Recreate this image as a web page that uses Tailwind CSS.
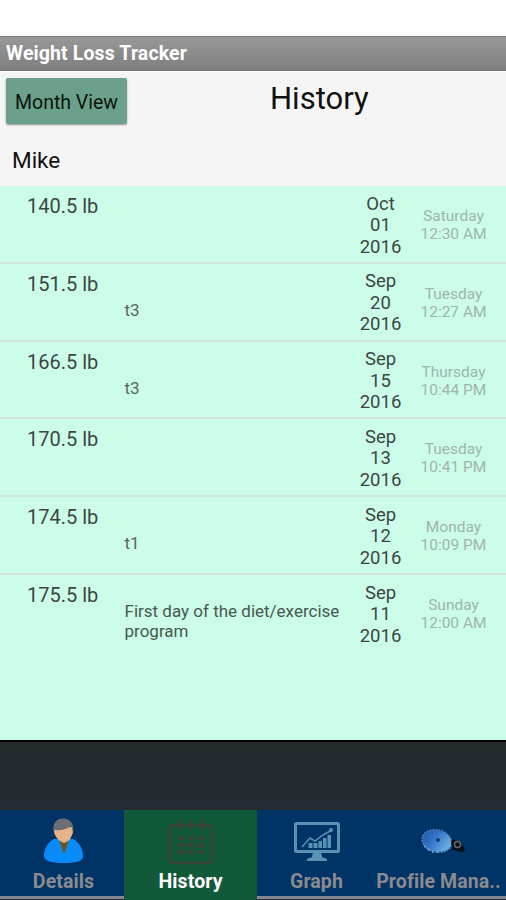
<!DOCTYPE html>
<html lang="en">
<head>
<meta charset="utf-8">
<title>Weight Loss Tracker</title>
<script src="https://cdn.jsdelivr.net/npm/@tailwindcss/browser@4"></script>
</head>
<body class="bg-white">
<div class="flex h-[900px] w-[506px] flex-col overflow-hidden pt-9 font-[Roboto,sans-serif]">
  <header class="flex h-[35px] shrink-0 items-center border-t border-b border-t-[#7c7c7c] border-b-[#757575] bg-linear-to-b from-[#989898] to-[#7f7f7f] pl-1.5">
    <h1 class="text-[19.5px] leading-none font-bold tracking-[0.12px] whitespace-nowrap text-white">Weight Loss Tracker</h1>
  </header>
  <section class="flex h-[115px] shrink-0 flex-col border-t border-white bg-[#f5f5f5] text-[#111]">
    <div class="flex pt-[6px] pl-1.5">
      <button class="h-[46px] w-[121px] rounded-[2px] bg-[#6ba18b] pt-[3px] text-[19.5px] leading-none whitespace-nowrap text-[#0b120f] shadow-[0_1px_2px_rgba(0,0,0,0.4)]">Month View</button>
      <h2 class="ml-[143px] pt-[3px] text-[31px] leading-[36px]">History</h2>
    </div>
    <p class="mt-[23px] pl-3 text-[22.5px] leading-[26px]">Mike</p>
  </section>
  <main class="h-[554px] shrink-0 bg-[#ccfde9] text-[#3c4643]">
    <div class="flex h-[77.8px] border-b-2 border-[#d3e5dc]">
      <div class="w-[124.5px] pt-2 pl-[27px] text-[20px] leading-6">140.5 lb</div>
      <div class="w-[225.5px]"></div>
      <div class="w-[61px] pt-[7.5px] text-center text-[18.5px] leading-[21.5px]">Oct<br>01<br>2016</div>
      <div class="w-[85px] pt-[21px] text-center text-[15.5px] leading-[18px] text-[#a0b5ac]">Saturday<br>12:30 AM</div>
    </div>
    <div class="flex h-[77.8px] border-b-2 border-[#d3e5dc]">
      <div class="w-[124.5px] pt-2 pl-[27px] text-[20px] leading-6">151.5 lb</div>
      <div class="w-[225.5px] pt-[37px] text-[17px] leading-[19.6px] text-[#566760]">t3</div>
      <div class="w-[61px] pt-[7.5px] text-center text-[18.5px] leading-[21.5px]">Sep<br>20<br>2016</div>
      <div class="w-[85px] pt-[21px] text-center text-[15.5px] leading-[18px] text-[#a0b5ac]">Tuesday<br>12:27 AM</div>
    </div>
    <div class="flex h-[77.8px] border-b-2 border-[#d3e5dc]">
      <div class="w-[124.5px] pt-2 pl-[27px] text-[20px] leading-6">166.5 lb</div>
      <div class="w-[225.5px] pt-[37px] text-[17px] leading-[19.6px] text-[#566760]">t3</div>
      <div class="w-[61px] pt-[7.5px] text-center text-[18.5px] leading-[21.5px]">Sep<br>15<br>2016</div>
      <div class="w-[85px] pt-[21px] text-center text-[15.5px] leading-[18px] text-[#a0b5ac]">Thursday<br>10:44 PM</div>
    </div>
    <div class="flex h-[77.8px] border-b-2 border-[#d3e5dc]">
      <div class="w-[124.5px] pt-2 pl-[27px] text-[20px] leading-6">170.5 lb</div>
      <div class="w-[225.5px]"></div>
      <div class="w-[61px] pt-[7.5px] text-center text-[18.5px] leading-[21.5px]">Sep<br>13<br>2016</div>
      <div class="w-[85px] pt-[21px] text-center text-[15.5px] leading-[18px] text-[#a0b5ac]">Tuesday<br>10:41 PM</div>
    </div>
    <div class="flex h-[77.8px] border-b-2 border-[#d3e5dc]">
      <div class="w-[124.5px] pt-2 pl-[27px] text-[20px] leading-6">174.5 lb</div>
      <div class="w-[225.5px] pt-[37px] text-[17px] leading-[19.6px] text-[#566760]">t1</div>
      <div class="w-[61px] pt-[7.5px] text-center text-[18.5px] leading-[21.5px]">Sep<br>12<br>2016</div>
      <div class="w-[85px] pt-[21px] text-center text-[15.5px] leading-[18px] text-[#a0b5ac]">Monday<br>10:09 PM</div>
    </div>
    <div class="flex h-[77.8px]">
      <div class="w-[124.5px] pt-2 pl-[27px] text-[20px] leading-6">175.5 lb</div>
      <div class="w-[225.5px] pt-[27px] text-[17px] leading-[19.6px] text-[#465850]">First day of the diet/exercise<br>program</div>
      <div class="w-[61px] pt-[8px] text-center text-[18.5px] leading-[21.5px]">Sep<br>11<br>2016</div>
      <div class="w-[85px] pt-[21px] text-center text-[15.5px] leading-[18px] text-[#a0b5ac]">Sunday<br>12:00 AM</div>
    </div>
  </main>
  <div class="h-[70px] shrink-0 border-t-2 border-black bg-linear-to-b from-[#222a2c] to-[#262a33]"></div>
  <nav class="flex h-[90px] shrink-0 bg-[#222a33] text-[19.5px] leading-[22px] font-bold tracking-[0.1px] text-[#8b8b8f]">
    <div class="flex h-[89px] w-[124px] flex-col items-center border-b-3 border-[#85868f] bg-[#003466] pt-2 pl-[3px]">
      <svg class="h-[46px] w-[42px] shrink-0" viewBox="0 0 42 46">
        <path d="M11 21C5 24 1 31 1 38q0 7 20 7t19-7c0-7-4-14-10-17z" fill="#078cfa"/>
        <path d="M16 22h10l-5 14z" fill="#76501f"/>
        <path d="M12 9h17l1 5q-2 7-5 9l-4 2-4-2q-5-4-6-9z" fill="#e7b38b"/>
        <path d="M10.500 14Q9 1 20 .5 31 1 30.500 14L28 8q-6 5-17 4z" fill="#6b6f71"/>
      </svg>
      <span class="mt-[7px]">Details</span>
    </div>
    <div class="flex h-[90px] w-[133px] flex-col items-center bg-[#12593a] pt-[10px] text-white">
      <svg class="h-[45px] w-[46px] shrink-0" viewBox="0 0 46 45" fill="none" stroke="#3b423c" stroke-width="2.4">
        <path d="M8 5H5.500q-4 0-4 4v30q0 4 4 4h35q4 0 4-4V9q0-4-4-4H8"/>
        <path d="M12 0v10M23 0v10M34.500 0v10" stroke-width="2.800"/>
        <path d="M10.500 18h5.500m4.200 0h5.500m4.200 0h5.500M10.500 25h5.500m4.200 0h5.500m4.200 0h5.500M10.500 32h5.500m4.200 0h5.500m4.200 0h5.500" stroke-width="4.600"/>
      </svg>
      <span class="mt-[6px]">History</span>
    </div>
    <div class="flex h-[89px] w-[119px] flex-col items-center border-b-3 border-[#85868f] bg-[#003466] pt-3">
      <svg class="h-[40px] w-[46px] shrink-0" viewBox="0 0 46 40">
        <rect x="1.500" y="1.500" width="43" height="28" rx="1" fill="none" stroke="#5793b2" stroke-width="3"/>
        <path d="M19 30h8l1 5 5 2v2H13v-2l5-2z" fill="#5793b2"/>
        <path d="M14.500 21h4v5h-4zM19.500 21h4v5h-4zM24.500 19h3.500v7h-3.500zM29 16h3.500v10H29zM33.500 13h3.500v13h-3.500z" fill="#5793b2"/>
        <path d="M8 25l8-9 5 3 8-6 9-5" fill="none" stroke="#5793b2" stroke-width="1.500"/>
        <circle cx="37" cy="8" r="2" fill="#5793b2"/>
      </svg>
      <span class="mt-[9px]">Graph</span>
    </div>
    <div class="flex h-[89px] w-[130px] flex-col items-center border-b-3 border-[#85868f] bg-[#003466] pt-[18px] pr-[5px]">
      <svg class="ml-2 h-[28px] w-[46px] shrink-0" viewBox="0 0 46 28">
        <defs><linearGradient id="disc" x1="0" x2="1" y1="0" y2=".3"><stop stop-color="#1e55a4"/><stop offset=".5" stop-color="#3477ca"/><stop offset="1" stop-color="#69aee0"/></linearGradient></defs>
        <ellipse cx="17" cy="13" rx="15" ry="10.500" transform="rotate(14 17 13)" fill="url(#disc)"/>
        <ellipse cx="17" cy="13" rx="15" ry="11" transform="rotate(14 17 13)" fill="none" stroke="#4c85c8" stroke-width="1.500" stroke-dasharray="2 1"/>
        <path d="M4 17l2 3M8 20l1 3M12 22l1 3M17 23l1 2" stroke="#75a5dc" stroke-width="1.200"/>
        <circle cx="18" cy="12" r="2" fill="#123b70"/>
        <path d="M32 11l9 3 4 8-2 2-10-2-2-7z" fill="#0b1014"/>
        <circle cx="37.500" cy="16.500" r="3" fill="none" stroke="#626b72" stroke-width="1.500"/>
      </svg>
      <span class="mt-[15px] whitespace-nowrap">Profile Mana..</span>
    </div>
  </nav>
</div>
</body>
</html>
